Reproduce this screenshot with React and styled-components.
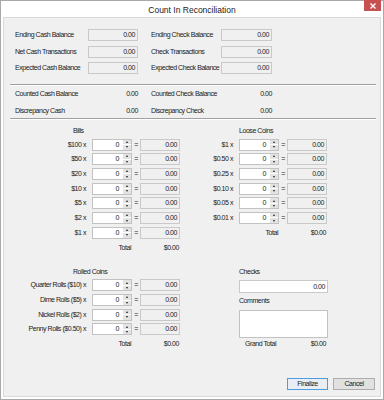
import styled, { createGlobalStyle } from "styled-components";

const GlobalStyle = createGlobalStyle`
    html, body {
        margin: 0;
        padding: 0;
        background: #ffffff;
    }
    * {
        box-sizing: border-box;
    }
`

const Window = styled.div`
    width: 384px;
    height: 400px;
    display: flex;
    flex-direction: column;
    background-color: #ffffff;
    border: 1px solid #a8a8a8;
    font-family: "Liberation Sans", Arial, sans-serif;
    font-size: 7px;
    letter-spacing: -0.45px;
    color: #1a1a1a;
`

const TitleBar = styled.div`
    height: 16px;
    display: grid;
    grid-template-columns: 1fr auto 1fr;
    align-items: center;
`

const Title = styled.div`
    grid-column: 2;
    font-size: 8.5px;
    letter-spacing: 0;
    color: #222;
    padding-top: 1px;
`

const CloseButton = styled.div`
    grid-column: 3;
    justify-self: end;
    align-self: start;
    width: 17px;
    height: 11px;
    margin-right: 2px;
    margin-top: -1px;
    background-color: #c75050;
    display: flex;
    align-items: center;
    justify-content: center;
`

const Body = styled.div`
    flex: 1;
    margin: 0 2px 2px 2px;
    background-color: #f0f0f0;
    border: 1px solid #dadada;
    display: flex;
    flex-direction: column;
`

const TopRow = styled.div`
    display: flex;
    gap: 13px;
    padding: ${(props) => props.$pad || "0 0 0 11px"};
`

const FieldGrid = styled.div`
    display: grid;
    grid-template-columns: ${(props) => `${props.$label}px ${props.$field}px`};
    grid-auto-rows: 12px;
    row-gap: ${(props) => `${props.$gap}px`};
    align-items: center;
`

const Label = styled.div`
    line-height: 12px;
    white-space: nowrap;
    text-align: ${(props) => props.$align || "left"};
    padding-right: ${(props) => props.$align === "right" ? "6px" : "0"};
`

const ReadBox = styled.div`
    height: ${(props) => props.$h || 12}px;
    line-height: ${(props) => (props.$h || 12) - 2}px;
    border: 1px solid #c9c9c9;
    background-color: ${(props) => props.$white ? "#ffffff" : "#f0f0f0"};
    text-align: right;
    padding-right: 2px;
`

const Value = styled.div`
    text-align: right;
    line-height: 12px;
`

const Separator = styled.div`
    margin: ${(props) => props.$m};
    border-top: 1px solid #a0a0a0;
    border-bottom: 1px solid #ffffff;
`

const LowerGrid = styled.div`
    display: grid;
    grid-template-columns: 161px 128px;
    column-gap: 20px;
    row-gap: 12.5px;
    padding: 5px 0 0 15px;
    align-items: start;
`

const Section = styled.div`
    display: flex;
    flex-direction: column;
`

const SectionTitle = styled.div`
    line-height: 12px;
    height: 12px;
    margin-left: ${(props) => `${props.$left}px`};
    margin-bottom: ${(props) => `${props.$below ?? 1.5}px`};
    white-space: nowrap;
`

const CountGrid = styled.div`
    display: grid;
    grid-template-columns: ${(props) => `${props.$label}px 40px 8px 40px`};
    grid-auto-rows: 12px;
    row-gap: 2.7px;
    align-items: center;
`

const Spin = styled.div`
    height: 12px;
    display: flex;
    border: 1px solid #c2c2c2;
    background-color: #ffffff;
`

const SpinText = styled.div`
    flex: 1;
    text-align: right;
    line-height: 10px;
    padding-right: 3px;
`

const SpinButtons = styled.div`
    width: 9px;
    display: flex;
    flex-direction: column;
    gap: 1px;
    padding: 0 0 0 1px;
    background-color: #ffffff;
`

const SpinHalf = styled.div`
    flex: 1;
    background-color: #e3e3e3;
    display: flex;
    align-items: center;
    justify-content: center;
`

const Arrow = styled.div`
    width: 0;
    height: 0;
    border-left: 1.5px solid transparent;
    border-right: 1.5px solid transparent;
    border-${(props) => props.$up ? "bottom" : "top"}: 2px solid #222;
`

const Equals = styled.div`
    text-align: center;
    line-height: 12px;
`

const CountRow = styled.div`
    display: contents;
`

const TotalCell = styled.div`
    grid-column: ${(props) => props.$col};
    text-align: right;
    line-height: 12px;
    padding-right: 1px;
    margin-top: ${(props) => `${props.$top || 0}px`};
`

const Block = styled.div`
    margin-left: ${(props) => `${props.$left}px`};
    width: 89px;
    display: flex;
    flex-direction: column;
`

const Comments = styled.div`
    height: 28px;
    border: 1px solid #c2c2c2;
    background-color: #ffffff;
    margin-top: 3px;
`

const GrandTotal = styled.div`
    display: flex;
    justify-content: space-between;
    line-height: 12px;
    padding: 0 2px 0 6px;
`

const ButtonBar = styled.div`
    margin-top: auto;
    display: flex;
    justify-content: flex-end;
    gap: 5px;
    padding: 0 5px 6px 0;
`

const Button = styled.div`
    width: ${(props) => `${props.$w}px`};
    height: 12px;
    line-height: 10px;
    text-align: center;
    border: 1px solid ${(props) => props.$primary ? "#4a9de0" : "#adadad"};
    background-color: ${(props) => props.$primary ? "#e8eef4" : "#e1e1e1"};
`

const SpinBox = ({value}) => (
    <Spin>
        <SpinText>{value}</SpinText>
        <SpinButtons>
            <SpinHalf><Arrow $up /></SpinHalf>
            <SpinHalf><Arrow /></SpinHalf>
        </SpinButtons>
    </Spin>
);

const CountSection = ({title, titleLeft, labelWidth, rows, totalTop}) => (
    <Section>
        <SectionTitle $left={titleLeft}>{title}</SectionTitle>
        <CountGrid $label={labelWidth}>
            {rows.map(r => (
                <CountRow key={r}>
                    <Label $align="right">{r}</Label>
                    <SpinBox value="0" />
                    <Equals>=</Equals>
                    <ReadBox>0.00</ReadBox>
                </CountRow>
            ))}
            <TotalCell $col={2} $top={totalTop}>{'Total'}</TotalCell>
            <TotalCell $col={4} $top={totalTop}>{'$0.00'}</TotalCell>
        </CountGrid>
    </Section>
);

const bills = ['$100 x', '$50 x', '$20 x', '$10 x', '$5 x', '$2 x', '$1 x'];
const coins = ['$1 x', '$0.50 x', '$0.25 x', '$0.10 x', '$0.05 x', '$0.01 x'];
const rolls = ['Quarter Rolls ($10) x', 'Dime Rolls ($5) x', 'Nickel Rolls ($2) x', 'Penny Rolls ($0.50) x'];

const App = () => {
    return (
        <>
            <GlobalStyle />
            <Window>
                <TitleBar>
                    <Title>{'Count In Reconciliation'}</Title>
                    <CloseButton>
                        <svg width="6" height="6" viewBox="0 0 6 6">
                            <path d="M0.5 0.5 L5.5 5.5 M5.5 0.5 L0.5 5.5" stroke="#fff" strokeWidth="1.4" />
                        </svg>
                    </CloseButton>
                </TitleBar>
                <Body>
                    <TopRow $pad="11px 0 0 11px">
                        <FieldGrid $label={73} $field={50} $gap={4.5}>
                            <Label>{'Ending Cash Balance'}</Label><ReadBox>0.00</ReadBox>
                            <Label>{'Net Cash Transactions'}</Label><ReadBox>0.00</ReadBox>
                            <Label>{'Expected Cash Balance'}</Label><ReadBox>0.00</ReadBox>
                        </FieldGrid>
                        <FieldGrid $label={70} $field={51} $gap={4.5}>
                            <Label>{'Ending Check Balance'}</Label><ReadBox>0.00</ReadBox>
                            <Label>{'Check Transactions'}</Label><ReadBox>0.00</ReadBox>
                            <Label>{'Expected Check Balance'}</Label><ReadBox>0.00</ReadBox>
                        </FieldGrid>
                    </TopRow>
                    <Separator $m="10px 4px 0 6px" />
                    <TopRow $pad="2px 0 0 11px">
                        <FieldGrid $label={73} $field={50} $gap={5}>
                            <Label>{'Counted Cash Balance'}</Label><Value>0.00</Value>
                            <Label>{'Discrepancy Cash'}</Label><Value>0.00</Value>
                        </FieldGrid>
                        <FieldGrid $label={70} $field={51} $gap={5}>
                            <Label>{'Counted Check Balance'}</Label><Value>0.00</Value>
                            <Label>{'Discrepancy Check'}</Label><Value>0.00</Value>
                        </FieldGrid>
                    </TopRow>
                    <Separator $m="1px 4px 0 6px" />
                    <LowerGrid>
                        <CountSection title="Bills" titleLeft={54} labelWidth={73} rows={bills} totalTop={1} />
                        <CountSection title="Loose Coins" titleLeft={39} labelWidth={39} rows={coins} totalTop={0} />
                        <CountSection title="Rolled Coins" titleLeft={54} labelWidth={73} rows={rolls} totalTop={0} />
                        <Section>
                            <Block $left={39}>
                                <SectionTitle $left={0} $below={2}>{'Checks'}</SectionTitle>
                                <ReadBox $white $h={13}>0.00</ReadBox>
                                <SectionTitle $left={0} $below={0} style={{marginTop: 2}}>{'Comments'}</SectionTitle>
                                <Comments />
                                <GrandTotal>
                                    <span>{'Grand Total'}</span>
                                    <span>{'$0.00'}</span>
                                </GrandTotal>
                            </Block>
                        </Section>
                    </LowerGrid>
                    <ButtonBar>
                        <Button $primary $w={41}>{'Finalize'}</Button>
                        <Button $w={42}>{'Cancel'}</Button>
                    </ButtonBar>
                </Body>
            </Window>
        </>
    );
}

export default App;
